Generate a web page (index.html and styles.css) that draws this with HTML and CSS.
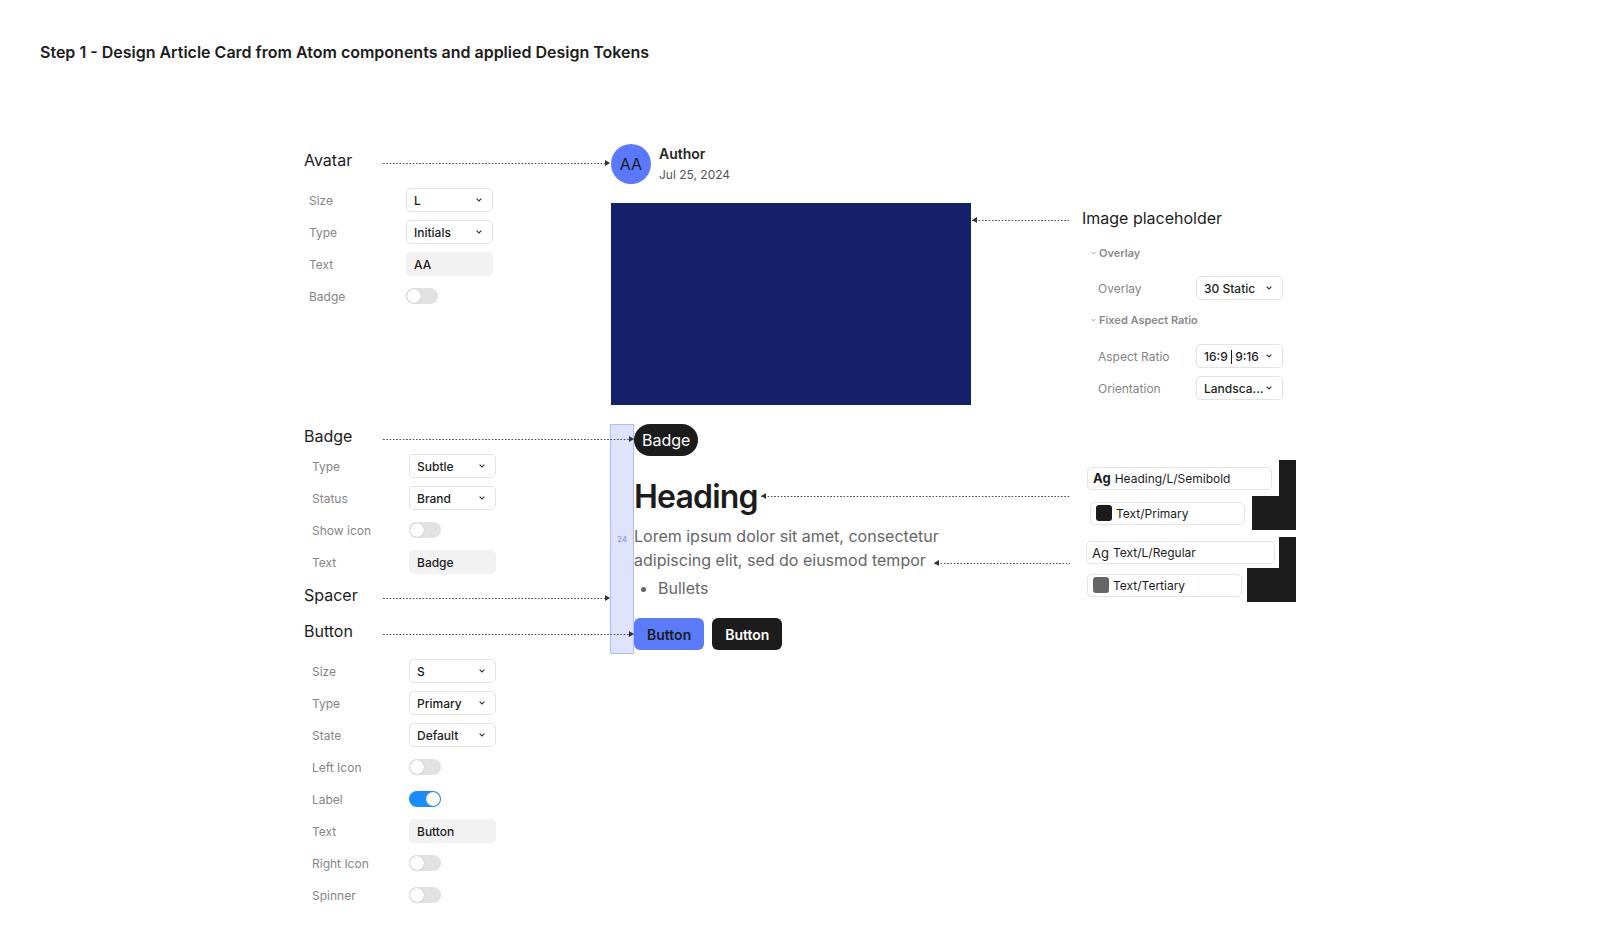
FILE: index.html
```html
<!DOCTYPE html>
<html lang="en">
<head>
    <meta charset="UTF-8">
    <meta name="viewport" content="width=device-width, initial-scale=1.0">
    <title>Article Card - Step 1</title>
    <link rel="stylesheet" href="styles.css">
</head>
<body>
    <h1 class="title">Step 1 - Design Article Card from Atom components and applied Design Tokens</h1>

    <div class="canvas">
        <!-- top: avatar + image placeholder -->
        <div class="top-row">
            <div class="props avatar-props">
                <div class="part-head">
                    <span class="name">Avatar</span>
                    <span class="link end"></span>
                </div>
                <div class="prop-list">
                    <div class="prop">
                        <span class="prop-label">Size</span>
                        <div class="select"><span>L</span><svg width="6" height="4" viewBox="0 0 6 4"><polyline points="0.6,0.6 3,3 5.4,0.6" fill="none" stroke="#333" stroke-width="1.1"/></svg></div>
                    </div>
                    <div class="prop">
                        <span class="prop-label">Type</span>
                        <div class="select"><span>Initials</span><svg width="6" height="4" viewBox="0 0 6 4"><polyline points="0.6,0.6 3,3 5.4,0.6" fill="none" stroke="#333" stroke-width="1.1"/></svg></div>
                    </div>
                    <div class="prop">
                        <span class="prop-label">Text</span>
                        <div class="field">AA</div>
                    </div>
                    <div class="prop">
                        <span class="prop-label">Badge</span>
                        <div class="toggle"><span class="knob"></span></div>
                    </div>
                </div>
            </div>

            <div class="card-top">
                <div class="author">
                    <div class="avatar">AA</div>
                    <div>
                        <div class="author-name">Author</div>
                        <div class="author-date">Jul 25, 2024</div>
                    </div>
                </div>
                <div class="image"></div>
            </div>

            <div class="image-props">
                <div class="image-head">
                    <span class="link start"></span>
                    <span>Image placeholder</span>
                </div>
                <div class="group">
                    <div class="group-head first">
                        <svg width="5" height="4" viewBox="0 0 5 4"><polyline points="0.5,1 2.5,3 4.5,1" fill="none" stroke="#999" stroke-width="0.9"/></svg>
                        <span>Overlay</span>
                    </div>
                    <div class="prop-list">
                        <div class="prop">
                            <span class="prop-label">Overlay</span>
                            <div class="select"><span>30 Static</span><svg width="6" height="4" viewBox="0 0 6 4"><polyline points="0.6,0.6 3,3 5.4,0.6" fill="none" stroke="#333" stroke-width="1.1"/></svg></div>
                        </div>
                    </div>
                    <div class="group-head">
                        <svg width="5" height="4" viewBox="0 0 5 4"><polyline points="0.5,1 2.5,3 4.5,1" fill="none" stroke="#999" stroke-width="0.9"/></svg>
                        <span>Fixed Aspect Ratio</span>
                    </div>
                    <div class="prop-list">
                        <div class="prop">
                            <span class="prop-label">Aspect Ratio</span>
                            <div class="select"><span>16:9 <span class="bar"></span> 9:16</span><svg width="6" height="4" viewBox="0 0 6 4"><polyline points="0.6,0.6 3,3 5.4,0.6" fill="none" stroke="#333" stroke-width="1.1"/></svg></div>
                        </div>
                        <div class="prop">
                            <span class="prop-label">Orientation</span>
                            <div class="select"><span>Landsca...</span><svg width="6" height="4" viewBox="0 0 6 4"><polyline points="0.6,0.6 3,3 5.4,0.6" fill="none" stroke="#333" stroke-width="1.1"/></svg></div>
                        </div>
                    </div>
                </div>
            </div>
        </div>

        <!-- bottom: badge, spacer, button + text tokens -->
        <div class="bottom-row">
            <div class="props lower-props">
                <div class="part-head">
                    <span class="name">Badge</span>
                    <span class="link end over"></span>
                </div>
                <div class="prop-list badge-list">
                    <div class="prop">
                        <span class="prop-label">Type</span>
                        <div class="select"><span>Subtle</span><svg width="6" height="4" viewBox="0 0 6 4"><polyline points="0.6,0.6 3,3 5.4,0.6" fill="none" stroke="#333" stroke-width="1.1"/></svg></div>
                    </div>
                    <div class="prop">
                        <span class="prop-label">Status</span>
                        <div class="select"><span>Brand</span><svg width="6" height="4" viewBox="0 0 6 4"><polyline points="0.6,0.6 3,3 5.4,0.6" fill="none" stroke="#333" stroke-width="1.1"/></svg></div>
                    </div>
                    <div class="prop">
                        <span class="prop-label">Show icon</span>
                        <div class="toggle"><span class="knob"></span></div>
                    </div>
                    <div class="prop">
                        <span class="prop-label">Text</span>
                        <div class="field">Badge</div>
                    </div>
                </div>

                <div class="part-head spacer-head">
                    <span class="name">Spacer</span>
                    <span class="link end"></span>
                </div>

                <div class="part-head button-head">
                    <span class="name">Button</span>
                    <span class="link end over"></span>
                </div>
                <div class="prop-list button-list">
                    <div class="prop">
                        <span class="prop-label">Size</span>
                        <div class="select"><span>S</span><svg width="6" height="4" viewBox="0 0 6 4"><polyline points="0.6,0.6 3,3 5.4,0.6" fill="none" stroke="#333" stroke-width="1.1"/></svg></div>
                    </div>
                    <div class="prop">
                        <span class="prop-label">Type</span>
                        <div class="select"><span>Primary</span><svg width="6" height="4" viewBox="0 0 6 4"><polyline points="0.6,0.6 3,3 5.4,0.6" fill="none" stroke="#333" stroke-width="1.1"/></svg></div>
                    </div>
                    <div class="prop">
                        <span class="prop-label">State</span>
                        <div class="select"><span>Default</span><svg width="6" height="4" viewBox="0 0 6 4"><polyline points="0.6,0.6 3,3 5.4,0.6" fill="none" stroke="#333" stroke-width="1.1"/></svg></div>
                    </div>
                    <div class="prop">
                        <span class="prop-label">Left Icon</span>
                        <div class="toggle"><span class="knob"></span></div>
                    </div>
                    <div class="prop">
                        <span class="prop-label">Label</span>
                        <div class="toggle on"><span class="knob"></span></div>
                    </div>
                    <div class="prop">
                        <span class="prop-label">Text</span>
                        <div class="field">Button</div>
                    </div>
                    <div class="prop">
                        <span class="prop-label">Right Icon</span>
                        <div class="toggle"><span class="knob"></span></div>
                    </div>
                    <div class="prop">
                        <span class="prop-label">Spinner</span>
                        <div class="toggle"><span class="knob"></span></div>
                    </div>
                </div>
            </div>

            <div class="spacer">24</div>

            <div class="card-body">
                <span class="badge">Badge</span>
                <div class="heading-row">
                    <h2 class="heading">Heading</h2>
                    <span class="link start"></span>
                </div>
                <div class="lede">
                    <div>Lorem ipsum dolor sit amet, consectetur</div>
                    <div class="lede-end">
                        <span>adipiscing elit, sed do eiusmod tempor</span>
                        <span class="link start"></span>
                    </div>
                </div>
                <ul class="bullets">
                    <li>Bullets</li>
                </ul>
                <div class="actions">
                    <button class="btn btn-primary">Button</button>
                    <button class="btn btn-dark">Button</button>
                </div>
            </div>

            <div class="tokens">
                <div class="token-group">
                    <div class="token-row row-a">
                        <div class="token"><span class="ag">Ag</span>Heading/L/Semibold</div>
                        <div class="ink"></div>
                    </div>
                    <div class="token-row row-b">
                        <div class="token"><span class="swatch"></span>Text/Primary</div>
                        <div class="ink"></div>
                    </div>
                </div>
                <div class="token-group">
                    <div class="token-row row-c">
                        <div class="token"><span class="ag regular">Ag</span>Text/L/Regular</div>
                        <div class="ink"></div>
                    </div>
                    <div class="token-row row-d">
                        <div class="token"><span class="swatch tertiary"></span>Text/Tertiary</div>
                        <div class="ink"></div>
                    </div>
                </div>
            </div>
        </div>
    </div>
</body>
</html>
```

FILE: styles.css
```css
* {
    margin: 0;
    padding: 0;
    box-sizing: border-box;
}
body {
    font-family: Inter, "Noto Sans", sans-serif;
    color: #1c1c1c;
    background-color: #ffffff;
}
.title {
    font-size: 16px;
    font-weight: 600;
    line-height: 24px;
    padding: 40px 0 0 40px;
}
.canvas {
    margin-top: 80px;
    padding-left: 304px;
}
.top-row,
.bottom-row {
    display: flex;
    align-items: flex-start;
}
.bottom-row {
    margin-top: 19px;
}

/* property panels */
.props {
    width: 306px;
    flex-shrink: 0;
}
.avatar-props {
    padding-top: 4px;
}
.part-head {
    display: flex;
    align-items: center;
    height: 24px;
    font-size: 16px;
}
.part-head .name {
    width: 79px;
    flex-shrink: 0;
}
.link {
    flex: 1;
    height: 6px;
    margin-top: 6px;
    position: relative;
    z-index: 1;
    background: linear-gradient(to right, #4f4f4f 1.5px, transparent 1.5px) repeat-x 0 50% / 3.3px 1px;
}
.link.end::after {
    content: "";
    position: absolute;
    right: 0;
    top: 0;
    border-left: 5px solid #333333;
    border-top: 3px solid transparent;
    border-bottom: 3px solid transparent;
}
.link.start::before {
    content: "";
    position: absolute;
    left: 0;
    top: 0;
    border-right: 5px solid #333333;
    border-top: 3px solid transparent;
    border-bottom: 3px solid transparent;
}
.link.over {
    margin-right: -24px;
}
.prop-list {
    margin-top: 12px;
    padding-left: 5px;
}
.prop {
    display: flex;
    align-items: center;
    height: 32px;
    font-size: 12px;
}
.prop-label {
    width: 97px;
    flex-shrink: 0;
    color: #858585;
}
.select {
    width: 87px;
    height: 24px;
    border: 1px solid #e3e3e3;
    border-radius: 5px;
    display: flex;
    align-items: center;
    padding: 0 10px 0 7px;
    font-weight: 500;
    white-space: nowrap;
}
.select svg {
    margin-left: auto;
    flex-shrink: 0;
}
.select .bar {
    display: inline-block;
    width: 1px;
    height: 14px;
    vertical-align: -3px;
    background-color: #1c1c1c;
}
.field {
    width: 87px;
    height: 24px;
    border-radius: 5px;
    background-color: #f2f2f2;
    display: flex;
    align-items: center;
    padding-left: 8px;
    font-weight: 500;
}
.toggle {
    width: 32px;
    height: 16px;
    border-radius: 8px;
    background-color: #e2e2e2;
    display: flex;
    align-items: center;
    padding: 1px;
}
.toggle .knob {
    width: 14px;
    height: 14px;
    border-radius: 50%;
    background-color: #ffffff;
    box-shadow: 0 0 1px rgba(0, 0, 0, 0.35);
}
.toggle.on {
    background-color: #1a8cff;
    justify-content: flex-end;
}

.badge-list,
.button-list {
    padding-left: 8px;
}
.badge-list {
    margin-top: 2px;
}
.spacer-head {
    margin-top: 5px;
}
.button-head {
    margin-top: 12px;
}

/* card top */
.card-top {
    width: 361px;
    flex-shrink: 0;
    padding-left: 1px;
}
.author {
    display: flex;
    gap: 8px;
}
.avatar {
    width: 40px;
    height: 40px;
    border-radius: 50%;
    background-color: #5b79ff;
    display: flex;
    align-items: center;
    justify-content: center;
    font-size: 16px;
}
.author-name {
    font-size: 14px;
    font-weight: 600;
    line-height: 20px;
    color: #262626;
}
.author-date {
    margin-top: 2px;
    font-size: 12px;
    line-height: 18px;
    color: #555555;
}
.image {
    margin-top: 19px;
    width: 360px;
    height: 202px;
    background-color: #15216a;
}

/* image placeholder props */
.image-props {
    padding-top: 62px;
}
.image-head {
    display: flex;
    align-items: center;
    height: 24px;
    font-size: 16px;
}
.image-head .link {
    flex: none;
    width: 97px;
    margin: 4px 13px 0 1px;
}
.group {
    padding-left: 120px;
}
.group-head {
    display: flex;
    align-items: center;
    gap: 3px;
    height: 24px;
    margin-top: 4px;
    font-size: 11px;
    font-weight: 600;
    color: #8a8a8a;
}
.group-head.first {
    margin-top: 11px;
}
.group .prop-list {
    padding-left: 7px;
    margin-top: 8px;
}
.group .group-head.first + .prop-list {
    margin-top: 7px;
}
.group .prop-label {
    width: 98px;
}

/* card body */
.spacer {
    width: 24px;
    height: 230px;
    flex-shrink: 0;
    background-color: #dfe3fd;
    border: 1px solid #b1bbf9;
    display: flex;
    align-items: center;
    justify-content: center;
    font-size: 8px;
    color: #7f8ef5;
}
.card-body {
    width: 436px;
    flex-shrink: 0;
}
.badge {
    display: inline-flex;
    align-items: center;
    height: 32px;
    padding: 0 8px;
    border-radius: 16px;
    background-color: #1c1c1c;
    color: #ffffff;
    font-size: 16px;
}
.heading-row {
    display: flex;
    align-items: center;
    margin-top: 21px;
}
.heading {
    font-size: 32px;
    font-weight: 600;
    line-height: 40px;
    letter-spacing: -0.8px;
}
.heading-row .link {
    margin: -2px 0 0 3px;
}
.lede {
    margin-top: 7px;
    font-size: 16px;
    line-height: 24px;
    color: #666666;
}
.lede-end {
    display: flex;
    align-items: center;
}
.lede-end .link {
    margin: 6px 0 0 8px;
}
.bullets {
    margin-top: 4px;
    padding-left: 24px;
    font-size: 16px;
    line-height: 24px;
    color: #666666;
}
.actions {
    display: flex;
    gap: 8px;
    margin-top: 18px;
}
.btn {
    height: 32px;
    padding: 0 13px;
    border: none;
    border-radius: 6px;
    font-family: inherit;
    font-size: 14px;
    font-weight: 600;
}
.btn-primary {
    background-color: #5b7cfa;
    color: #1c1c1c;
}
.btn-dark {
    background-color: #1c1c1c;
    color: #ffffff;
}

/* design tokens */
.tokens {
    padding: 36px 0 0 16px;
}
.token-group + .token-group {
    margin-top: 7px;
}
.token-row {
    display: flex;
    align-items: center;
}
.token {
    height: 23px;
    border: 1px solid #e4e4e4;
    border-radius: 5px;
    display: flex;
    align-items: center;
    gap: 4px;
    padding-left: 5px;
    font-size: 12px;
}
.token .ag {
    font-size: 13px;
    font-weight: 700;
}
.token .ag.regular {
    font-weight: 400;
}
.swatch {
    width: 16px;
    height: 16px;
    border-radius: 3px;
    background-color: #1c1c1c;
}
.swatch.tertiary {
    background-color: #666666;
}
.ink {
    align-self: stretch;
    background-color: #1c1c1c;
}
.row-a { height: 36px; }
.row-a .token { width: 185px; margin-left: 1px; }
.row-a .ink { width: 17px; margin-left: 7px; }
.row-b { height: 34px; }
.row-b .token { width: 155px; margin-left: 4px; }
.row-b .ink { width: 44px; margin-left: 7px; }
.row-c { height: 31px; }
.row-c .token { width: 189px; }
.row-c .ink { width: 17px; margin-left: 4px; }
.row-d { height: 34px; }
.row-d .token { width: 155px; margin-left: 1px; }
.row-d .ink { width: 49px; margin-left: 5px; }
```
